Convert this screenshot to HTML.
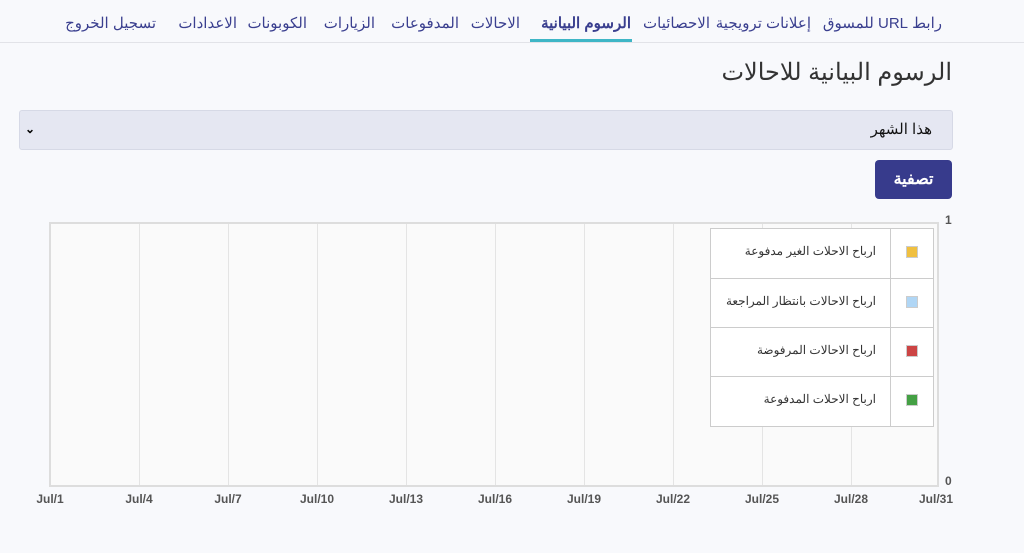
<!DOCTYPE html>
<html><head><meta charset="utf-8"><style>
body{margin:0;width:1024px;height:553px;background:#f8f9fc;font-family:"Liberation Sans","Noto Sans CJK SC",sans-serif;position:relative;overflow:hidden}
.nav{position:absolute;top:0;left:0;width:1024px;height:42px;border-bottom:1px solid #e2e3e8}
.nav div{position:absolute;top:14px;font-size:15px;color:#3a3f8f;white-space:nowrap;direction:rtl}
.nav .act{font-weight:bold;color:#3a3f8f}
.ul{position:absolute;left:530px;top:39px;width:102px;height:3px;background:#3fb6c6}
h1{position:absolute;right:72px;top:58px;margin:0;font-size:24px;font-weight:normal;color:#333;direction:rtl}
.sel{position:absolute;left:19px;top:110px;width:932px;height:38px;background:#e5e7f2;border:1px solid #d6d9e6;border-radius:3px}
.sel .t{position:absolute;right:20px;top:9px;font-size:15px;color:#111;direction:rtl}
.sel .a{position:absolute;left:5px;top:11px;font-size:12px;font-weight:bold}
.btn{position:absolute;left:875px;top:160px;width:77px;height:39px;background:#373b8c;border-radius:4px;color:#fff;font-size:16px;font-weight:bold;text-align:center;line-height:39px}
.chart{position:absolute;left:49px;top:222px;width:886px;height:261px;border:2px solid #ddd;background:#fafafa}
.g{position:absolute;top:0;width:1px;height:261px;background:#e4e4e4}
.xl{position:absolute;top:492px;font-size:12px;font-weight:bold;color:#555;width:50px;margin-left:-25px;text-align:center}
.yl{position:absolute;left:945px;font-size:12px;font-weight:bold;color:#555}
.leg{position:absolute;left:710px;top:228px;width:222px;height:197px;border:1px solid #ccc;background:#fff}
.row{position:absolute;left:0;width:222px;height:49px;border-top:1px solid #ccc}
.row .tx{position:absolute;right:57px;top:15px;font-size:12px;color:#333;direction:rtl;white-space:nowrap}
.row .sw{position:absolute;left:195px;top:17px;width:10px;height:10px;border:1px solid #ccc}
.vd{position:absolute;left:179px;top:0;width:1px;height:197px;background:#ccc}
</style></head><body>
<div class="nav">
<div style="right:82px">رابط URL للمسوق</div>
<div style="right:213px">إعلانات ترويجية</div>
<div style="right:314px">الاحصائيات</div>
<div class="act" style="right:393px">الرسوم البيانية</div>
<div style="right:504px">الاحالات</div>
<div style="right:565px">المدفوعات</div>
<div style="right:649px">الزيارات</div>
<div style="right:717px">الكوبونات</div>
<div style="right:787px">الاعدادات</div>
<div style="right:868px">تسجيل الخروج</div>
</div>
<div class="ul"></div>
<h1>الرسوم البيانية للاحالات</h1>
<div class="sel"><span class="t">هذا الشهر</span><span class="a">⌄</span></div>
<div class="btn">تصفية</div>
<div class="chart">
<div class="g" style="left:88px"></div><div class="g" style="left:177px"></div><div class="g" style="left:266px"></div><div class="g" style="left:355px"></div><div class="g" style="left:444px"></div><div class="g" style="left:533px"></div><div class="g" style="left:622px"></div><div class="g" style="left:711px"></div><div class="g" style="left:800px"></div>
</div>
<div class="yl" style="top:213px">1</div>
<div class="yl" style="top:474px">0</div>
<div class="xl" style="left:50px">Jul/1</div>
<div class="xl" style="left:139px">Jul/4</div>
<div class="xl" style="left:228px">Jul/7</div>
<div class="xl" style="left:317px">Jul/10</div>
<div class="xl" style="left:406px">Jul/13</div>
<div class="xl" style="left:495px">Jul/16</div>
<div class="xl" style="left:584px">Jul/19</div>
<div class="xl" style="left:673px">Jul/22</div>
<div class="xl" style="left:762px">Jul/25</div>
<div class="xl" style="left:851px">Jul/28</div>
<div class="xl" style="left:936px">Jul/31</div>
<div class="leg">
<div class="row" style="top:0;border-top:none"><span class="tx">ارباح الاحلات الغير مدفوعة</span><span class="sw" style="background:#f0c040"></span></div>
<div class="row" style="top:49px"><span class="tx">ارباح الاحالات بانتظار المراجعة</span><span class="sw" style="background:#b0d6f5"></span></div>
<div class="row" style="top:98px"><span class="tx">ارباح الاحالات المرفوضة</span><span class="sw" style="background:#cc4444"></span></div>
<div class="row" style="top:147px"><span class="tx">ارباح الاحلات المدفوعة</span><span class="sw" style="background:#44a044"></span></div>
<div class="vd"></div>
</div>
</body></html>
